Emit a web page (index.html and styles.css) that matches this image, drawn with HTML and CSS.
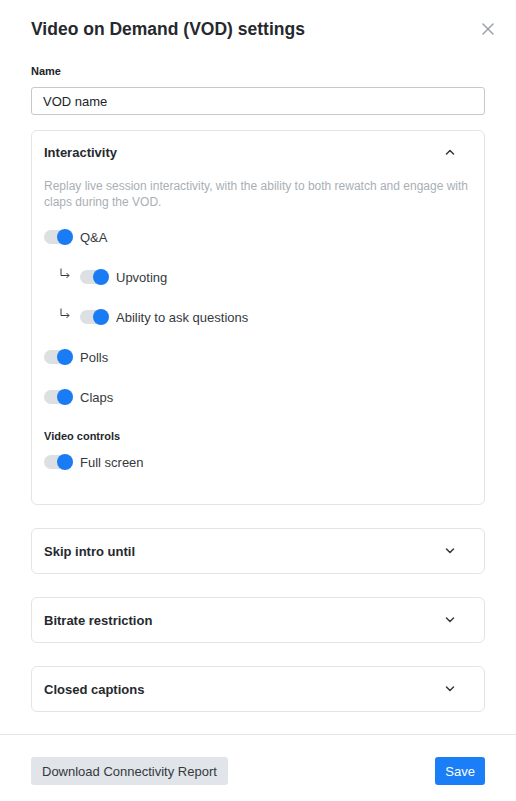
FILE: index.html
```html
<!DOCTYPE html>
<html lang="en">
<head>
	<meta charset="UTF-8">
	<title>Video on Demand (VOD) settings</title>
	<link rel="stylesheet" href="styles.css">
</head>
<body>
	<div class="modal">
		<div class="modal-body">
			<div class="modal-head">
				<h2>Video on Demand (VOD) settings</h2>
				<button class="close" aria-label="Close">
					<svg width="12" height="12" viewBox="0 0 12 12"><path d="M1 1L11 11M11 1L1 11" stroke="#9aa1a8" stroke-width="1.5" fill="none" stroke-linecap="round"/></svg>
				</button>
			</div>

			<label class="field-label">Name</label>
			<input class="text-input" type="text" value="VOD name">

			<div class="panel">
				<div class="panel-head">
					<span>Interactivity</span>
					<svg class="chev" width="10" height="6" viewBox="0 0 10 6"><path d="M1.5 5L5 1.5L8.5 5" stroke="#343a40" stroke-width="1.5" fill="none" stroke-linecap="round" stroke-linejoin="round"/></svg>
				</div>
				<p class="panel-desc">Replay live session interactivity, with the ability to both rewatch and engage with claps during the VOD.</p>

				<div class="toggles">
					<div class="toggle-row"><span class="switch"></span>Q&amp;A</div>
					<div class="toggle-row sub">
						<svg class="sub-arrow" width="10" height="11" viewBox="0 0 10 11"><path d="M1 0.5V7.5H9M6.5 5L9 7.5L6.5 10" stroke="#343a40" stroke-width="1" fill="none"/></svg>
						<span class="switch"></span>Upvoting
					</div>
					<div class="toggle-row sub">
						<svg class="sub-arrow" width="10" height="11" viewBox="0 0 10 11"><path d="M1 0.5V7.5H9M6.5 5L9 7.5L6.5 10" stroke="#343a40" stroke-width="1" fill="none"/></svg>
						<span class="switch"></span>Ability to ask questions
					</div>
					<div class="toggle-row"><span class="switch"></span>Polls</div>
					<div class="toggle-row"><span class="switch"></span>Claps</div>
				</div>

				<h4 class="group-title">Video controls</h4>
				<div class="toggle-row"><span class="switch"></span>Full screen</div>
			</div>

			<div class="panel closed">
				<div class="panel-head">
					<span>Skip intro until</span>
					<svg class="chev" width="10" height="6" viewBox="0 0 10 6"><path d="M1.5 1L5 4.5L8.5 1" stroke="#343a40" stroke-width="1.5" fill="none" stroke-linecap="round" stroke-linejoin="round"/></svg>
				</div>
			</div>
			<div class="panel closed">
				<div class="panel-head">
					<span>Bitrate restriction</span>
					<svg class="chev" width="10" height="6" viewBox="0 0 10 6"><path d="M1.5 1L5 4.5L8.5 1" stroke="#343a40" stroke-width="1.5" fill="none" stroke-linecap="round" stroke-linejoin="round"/></svg>
				</div>
			</div>
			<div class="panel closed">
				<div class="panel-head">
					<span>Closed captions</span>
					<svg class="chev" width="10" height="6" viewBox="0 0 10 6"><path d="M1.5 1L5 4.5L8.5 1" stroke="#343a40" stroke-width="1.5" fill="none" stroke-linecap="round" stroke-linejoin="round"/></svg>
				</div>
			</div>
		</div>

		<div class="modal-foot">
			<button class="btn btn-light">Download Connectivity Report</button>
			<button class="btn btn-primary">Save</button>
		</div>
	</div>
</body>
</html>
```

FILE: styles.css
```css
*{box-sizing:border-box;}
body{margin:0;background:#fff;font-family:"Liberation Sans",Arial,sans-serif;color:#343a40;}
.modal{width:516px;}
.modal-body{padding:17px 31px 0;}
.modal-head{display:flex;justify-content:space-between;align-items:center;height:24px;}
.modal-head h2{margin:0;font-size:17.5px;line-height:24px;font-weight:700;color:#25292e;}
.close{border:0;background:none;padding:0;margin-right:-9px;display:flex;}
.field-label{display:block;margin-top:22px;font-size:11px;line-height:16px;font-weight:700;color:#212529;}
.text-input{display:block;width:100%;height:28px;margin-top:8px;padding:0 11px;border:1px solid #c4c9ce;border-radius:3px;font:13px "Liberation Sans",Arial,sans-serif;color:#212529;}
.panel{margin-top:15px;border:1px solid #e1e4e8;border-radius:6px;padding:11px 12px 32px;}
.panel.closed{margin-top:23px;padding:12px;}
.panel-head{display:flex;justify-content:space-between;align-items:center;height:20px;font-size:13px;font-weight:700;color:#25292e;}
.chev{margin-right:17px;}
.panel-desc{margin:16px 0 0;font-size:12px;line-height:16px;color:#a9afb5;}
.toggles{display:flex;flex-direction:column;gap:20px;margin-top:17px;}
.toggle-row{display:flex;align-items:center;height:20px;font-size:13px;color:#343a40;}
.toggle-row.sub{padding-left:16px;}
.sub-arrow{margin-right:10px;margin-top:-8px;}
.switch{position:relative;width:29px;height:14px;margin-right:7px;border-radius:7px;background:#dde0e3;}
.switch::after{content:"";position:absolute;right:0;top:-1px;width:16px;height:16px;border-radius:50%;background:#1a7cf5;}
.group-title{margin:21px 0 8px;font-size:11px;line-height:16px;font-weight:700;color:#25292e;}
.modal-foot{display:flex;justify-content:space-between;margin-top:22px;padding:22px 31px;border-top:1px solid #e5e7ea;}
.btn{height:28px;border:0;border-radius:3px;padding:0 11px;font:13px "Liberation Sans",Arial,sans-serif;}
.btn-light{background:#e1e4e8;color:#343a40;}
.btn-primary{background:#1a7ef7;color:#fff;padding:0 10px;}
```
